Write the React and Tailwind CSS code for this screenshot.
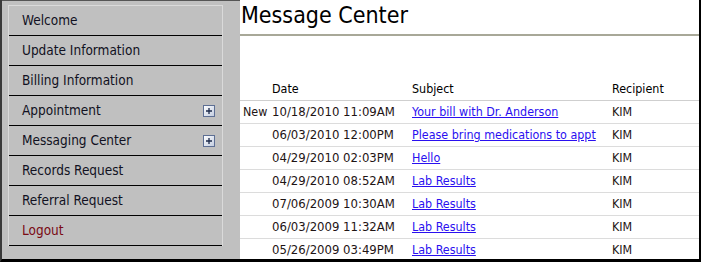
import React from "react";

const menu = [
  { label: "Welcome" },
  { label: "Update Information" },
  { label: "Billing Information" },
  { label: "Appointment", expand: true },
  { label: "Messaging Center", expand: true },
  { label: "Records Request" },
  { label: "Referral Request" },
  { label: "Logout", logout: true },
];

const messages = [
  { isNew: true, date: "10/18/2010 11:09AM", subject: "Your bill with Dr. Anderson", to: "KIM" },
  { date: "06/03/2010 12:00PM", subject: "Please bring medications to appt", to: "KIM" },
  { date: "04/29/2010 02:03PM", subject: "Hello", to: "KIM" },
  { date: "04/29/2010 08:52AM", subject: "Lab Results", to: "KIM" },
  { date: "07/06/2009 10:30AM", subject: "Lab Results", to: "KIM" },
  { date: "06/03/2009 11:32AM", subject: "Lab Results", to: "KIM" },
  { date: "05/26/2009 03:49PM", subject: "Lab Results", to: "KIM" },
];

function PlusBox() {
  return (
    <span className="w-[12px] h-[12px] border border-[#5d6f94] bg-gradient-to-br from-white to-[#c3cde0] flex items-center justify-center">
      <svg width="8" height="8" viewBox="0 0 8 8">
        <path d="M4 1v6M1 4h6" stroke="#1c2a4a" strokeWidth="1.3" />
      </svg>
    </span>
  );
}

export default function App() {
  return (
    <div
      className="w-[701px] h-[262px] flex overflow-hidden border-l-2 border-l-[#3a3a3a] border-b-[3px] border-b-black border-r-2 border-r-black bg-white"
      style={{ fontFamily: '"DejaVu Sans Condensed", "DejaVu Sans", sans-serif' }}
    >
      {/* left nav */}
      <div className="w-[238px] shrink-0 bg-[#c0c0c0] border-t border-t-[#555] pl-[6px] pt-[4px]">
        <div className="w-[215px] border-t border-x border-[#dadada]">
          {menu.map((item, i) => (
            <div
              key={`menu${i}`}
              className="h-[30px] flex items-center justify-between pl-[13px] pr-[7px] border-b border-b-black text-[13.5px]"
            >
              <span className={item.logout ? "text-[#7a0a14]" : "text-[#111122]"}>{item.label}</span>
              {item.expand && <PlusBox />}
            </div>
          ))}
        </div>
      </div>

      {/* content */}
      <div className="flex-1 text-[#1e1414]">
        <h1 className="h-[36px] pl-[1px] pt-[1px] text-[23px] leading-[28px] text-black border-b-2 border-b-[#a8a898]">
          Message Center
        </h1>
        <div className="mt-[42px] text-[12.4px]">
          <div className="grid grid-cols-[32px_140px_200px_1fr] h-[23px] items-center border-b border-b-[#cfcfcf] text-black">
            <span />
            <span>Date</span>
            <span>Subject</span>
            <span>Recipient</span>
          </div>
          {messages.map((m, i) => (
            <div
              key={`msg${i}`}
              className="grid grid-cols-[32px_140px_200px_1fr] h-[23px] items-center border-b border-b-[#dcdcdc]"
            >
              <span className="pl-[3px]">{m.isNew ? "New" : ""}</span>
              <span className="text-[13px]">{m.date}</span>
              <span>
                <a href="#" className="text-[#2a10f0] underline">
                  {m.subject}
                </a>
              </span>
              <span>{m.to}</span>
            </div>
          ))}
        </div>
      </div>
    </div>
  );
}
